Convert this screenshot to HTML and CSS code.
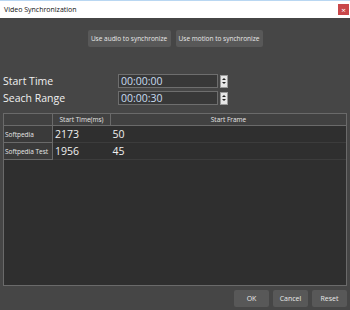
FILE: index.html
```html
<!DOCTYPE html>
<html lang="en">
<head>
    <meta charset="UTF-8">
    <title>Video Synchronization</title>
    <link rel="stylesheet" href="styles.css">
</head>
<body>
    <div class="window">
        <div class="titlebar">
            <span class="title">Video Synchronization</span>
            <span class="close">&#215;</span>
        </div>

        <div class="mode">
            <button class="mode-btn audio">Use audio to synchronize</button>
            <button class="mode-btn motion">Use motion to synchronize</button>
        </div>

        <div class="fields">
            <label>Start Time</label>
            <div class="spin">
                <input type="text" value="00:00:00">
                <span class="arrows"><i class="up"></i><i class="down"></i></span>
            </div>
            <label>Seach Range</label>
            <div class="spin">
                <input type="text" value="00:00:30">
                <span class="arrows"><i class="up"></i><i class="down"></i></span>
            </div>
        </div>

        <div class="grid">
            <table>
                <thead>
                    <tr>
                        <th class="corner"></th>
                        <th class="c-time">Start Time(ms)</th>
                        <th>Start Frame</th>
                    </tr>
                </thead>
                <tbody>
                    <tr>
                        <th class="rowhead">Softpedia</th>
                        <td>2173</td>
                        <td>50</td>
                    </tr>
                    <tr>
                        <th class="rowhead">Softpedia Test</th>
                        <td>1956</td>
                        <td>45</td>
                    </tr>
                </tbody>
            </table>
        </div>

        <div class="actions">
            <button class="act">OK</button>
            <button class="act">Cancel</button>
            <button class="act">Reset</button>
        </div>
    </div>
</body>
</html>
```

FILE: styles.css
```css
html, body {
    margin: 0;
    padding: 0;
}
body {
    font-family: "Open Sans", "Noto Sans", sans-serif;
    background-color: #464646;
    color: #e6e6e6;
}
.window {
    width: 350px;
    height: 310px;
    background-color: #464646;
    overflow: hidden;
}
.titlebar {
    height: 17px;
    background-color: #fff;
    border-top: 1px solid #b9d7f2;
    display: flex;
    align-items: center;
    justify-content: space-between;
    padding: 0 1px 0 4px;
    color: #111;
}
.title {
    font-size: 7px;
}
.close {
    width: 11px;
    height: 11px;
    background-color: #c9474a;
    color: #fff;
    font-size: 8px;
    line-height: 11px;
    text-align: center;
}
.mode {
    display: flex;
    justify-content: center;
    gap: 5px;
    padding-top: 12px;
}
button {
    font-family: "Open Sans", "Noto Sans", sans-serif;
    border: none;
    border-radius: 2px;
    color: #e8e8e8;
    background-color: #585858;
    padding: 0;
    white-space: nowrap;
    cursor: pointer;
}
.mode-btn {
    height: 17px;
    font-size: 6.5px;
}
.audio {
    width: 83px;
}
.motion {
    width: 87px;
}
.fields {
    display: grid;
    grid-template-columns: 115px 110px;
    row-gap: 3px;
    margin: 27px 0 0 3px;
    align-items: center;
}
.fields label {
    font-size: 10.5px;
    color: #f0f0f0;
}
.spin {
    display: flex;
    align-items: center;
    gap: 2px;
}
.spin input {
    width: 100px;
    height: 14px;
    box-sizing: border-box;
    border: 1px solid #6e6e6e;
    background-color: #383838;
    color: #c8dcf0;
    font-family: "Open Sans", "Noto Sans", sans-serif;
    font-size: 10.5px;
    padding: 0 0 0 2px;
}
.arrows {
    width: 8px;
    height: 13px;
    background-color: #e6e6e6;
    border: 1px solid #9a9a9a;
    box-sizing: border-box;
    display: flex;
    flex-direction: column;
    align-items: center;
    justify-content: center;
    gap: 2px;
}
.arrows i {
    width: 0;
    height: 0;
    border-left: 2px solid transparent;
    border-right: 2px solid transparent;
}
.arrows .up {
    border-bottom: 2px solid #222;
}
.arrows .down {
    border-top: 2px solid #222;
}
.grid {
    margin: 8px 3px 0 3px;
    height: 171px;
    border: 1px solid #6a6a6a;
    background-color: #2f2f2f;
}
table {
    width: 100%;
    border-collapse: collapse;
    font-size: 10.5px;
}
thead th {
    height: 11px;
    padding: 0;
    font-size: 6.5px;
    font-weight: normal;
    background-color: #414141;
    border: 1px solid #6a6a6a;
    border-top: none;
    color: #e6e6e6;
}
thead th:last-child {
    border-right: none;
}
.corner {
    width: 48px;
    border-left: none;
}
.c-time {
    width: 57px;
}
.rowhead {
    height: 16px;
    padding: 0 0 0 1px;
    text-align: left;
    font-size: 6.5px;
    font-weight: normal;
    background-color: #3a3a3a;
    border: 1px solid #6a6a6a;
    border-left: none;
    white-space: nowrap;
}
td {
    padding: 0 0 0 2px;
    border-bottom: 1px solid #3c3c3c;
    color: #f0f0f0;
}
.actions {
    display: flex;
    justify-content: flex-end;
    gap: 4px;
    padding: 4px 3px 0 0;
}
.act {
    width: 35px;
    height: 17px;
    font-size: 7px;
}
```
